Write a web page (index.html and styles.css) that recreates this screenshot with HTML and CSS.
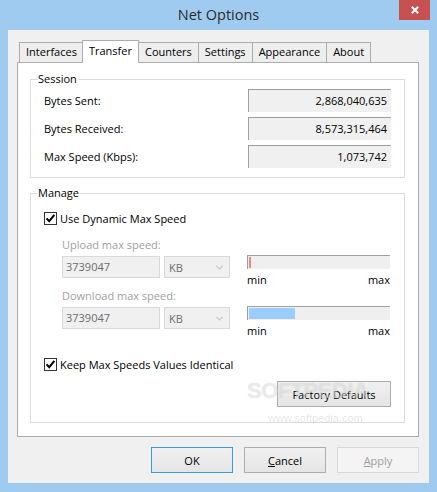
FILE: index.html
```html
<!DOCTYPE html>
<html>
<head>
<meta charset="utf-8">
<title>Net Options</title>
<link rel="stylesheet" href="styles.css">
</head>
<body>
<div class="window">
  <div class="titlebar">
    <div class="title">Net Options</div>
    <div class="close">
      <svg width="8" height="8" viewBox="0 0 8 8"><path d="M0.8 0.8 L7.2 7.2 M7.2 0.8 L0.8 7.2" stroke="#fff" stroke-width="2" fill="none"/></svg>
    </div>
  </div>
  <div class="client">
    <div class="tabs">
      <div class="tab">Interfaces</div>
      <div class="tab active">Transfer</div>
      <div class="tab">Counters</div>
      <div class="tab">Settings</div>
      <div class="tab">Appearance</div>
      <div class="tab">About</div>
    </div>
    <div class="panel">
      <fieldset class="group session">
        <legend>Session</legend>
        <div class="stats">
          <div class="stat"><span>Bytes Sent:</span><div class="value">2,868,040,635</div></div>
          <div class="stat"><span>Bytes Received:</span><div class="value">8,573,315,464</div></div>
          <div class="stat"><span>Max Speed (Kbps):</span><div class="value">1,073,742</div></div>
        </div>
      </fieldset>
      <fieldset class="group manage">
        <legend>Manage</legend>
        <div class="check">
          <span class="box"><svg width="11" height="11" viewBox="0 0 11 11"><path d="M1.6 5.4 L4.2 8.2 L9.4 1.8" stroke="#000" stroke-width="2" fill="none"/></svg></span>
          <span>Use Dynamic Max Speed</span>
        </div>
        <div class="speed">
          <div class="speed-label">Upload max speed:</div>
          <div class="inputs">
            <div class="textbox">3739047</div>
            <div class="combo"><span>KB</span><svg width="7" height="5" viewBox="0 0 7 5"><path d="M0.5 0.8 L3.5 3.8 L6.5 0.8" stroke="#c4c4c4" stroke-width="1.2" fill="none"/></svg></div>
          </div>
          <div class="meter">
            <div class="bar"><div class="fill up" style="width:2px"></div></div>
            <div class="scale"><span>min</span><span>max</span></div>
          </div>
        </div>
        <div class="speed">
          <div class="speed-label">Download max speed:</div>
          <div class="inputs">
            <div class="textbox">3739047</div>
            <div class="combo"><span>KB</span><svg width="7" height="5" viewBox="0 0 7 5"><path d="M0.5 0.8 L3.5 3.8 L6.5 0.8" stroke="#c4c4c4" stroke-width="1.2" fill="none"/></svg></div>
          </div>
          <div class="meter">
            <div class="bar"><div class="fill down" style="width:46px"></div></div>
            <div class="scale"><span>min</span><span>max</span></div>
          </div>
        </div>
        <div class="check keep">
          <span class="box"><svg width="11" height="11" viewBox="0 0 11 11"><path d="M1.6 5.4 L4.2 8.2 L9.4 1.8" stroke="#000" stroke-width="2" fill="none"/></svg></span>
          <span>Keep Max Speeds Values Identical</span>
        </div>
        <div class="actions">
          <button class="btn factory">Factory Defaults</button>
          <div class="watermark">SOFTPEDIA</div>
          <div class="watermark-url">www.softpedia.com</div>
        </div>
      </fieldset>
    </div>
    <div class="dialog-buttons">
      <button class="btn default">OK</button>
      <button class="btn"><u>C</u>ancel</button>
      <button class="btn" disabled><u>A</u>pply</button>
    </div>
  </div>
</div>
</body>
</html>
```
FILE: styles.css
```css
* { box-sizing: border-box; }
html, body { margin: 0; padding: 0; }
body {
  width: 437px;
  height: 492px;
  overflow: hidden;
  background: #a0cbf1;
  font-family: "Open Sans", "Noto Sans", sans-serif;
  font-size: 11px;
  color: #000;
}
.window { height: 492px; display: flex; flex-direction: column; }

.titlebar {
  height: 30px;
  display: grid;
  grid-template-columns: 1fr auto 1fr;
  align-items: start;
}
.title {
  grid-column: 2;
  font-size: 14.5px;
  line-height: 29px;
  color: #2b2b2b;
}
.close {
  grid-column: 3;
  justify-self: end;
  margin-right: 7px;
  width: 31px;
  height: 20px;
  background: #c75050;
  display: flex;
  align-items: center;
  justify-content: center;
}

.client {
  margin: 0 8px;
  height: 453px;
  background: #f0f0f0;
  padding: 10px 10px 0 9px;
}

.tabs {
  display: flex;
  align-items: flex-end;
  height: 22px;
  padding-left: 2px;
}
.tab {
  height: 20px;
  line-height: 18px;
  padding: 0 6px;
  border: 1px solid #acacac;
  border-bottom: 0;
  margin-left: -1px;
  background: #eeeeee;
  white-space: nowrap;
}
.tab:first-child { margin-left: 0; padding: 0 5px 0 6px; }
.tab.active {
  height: 23px;
  margin-bottom: -1px;
  line-height: 19px;
  padding: 0 6px;
  background: #fff;
  position: relative;
  z-index: 1;
}

.panel {
  height: 375px;
  background: #fff;
  border: 1px solid #acacac;
  padding: 8px 13px 0 12px;
}

.group {
  margin: 0;
  min-width: 0;
  border: 1px solid #dcdcdc;
  padding: 2px 13px 9px;
}
.group legend {
  padding: 0 1px;
  margin-left: -7px;
  line-height: 16px;
}

.stats { display: flex; flex-direction: column; gap: 5px; }
.stat {
  display: flex;
  justify-content: space-between;
  align-items: center;
  height: 23px;
}
.value {
  width: 143px;
  height: 23px;
  background: #f0f0f0;
  border-top: 1px solid #a0a0a0;
  border-left: 1px solid #a0a0a0;
  text-align: right;
  padding-right: 4px;
  line-height: 21px;
}

.manage {
  margin-top: 7px;
  padding: 10px 13px 15px;
}
.check {
  display: flex;
  align-items: center;
  height: 15px;
  line-height: 15px;
}
.box {
  width: 13px;
  height: 13px;
  border: 1px solid #333;
  background: #fff;
  margin-right: 3px;
  display: flex;
  align-items: center;
  justify-content: center;
}
.box svg { display: block; }

.speed {
  display: grid;
  grid-template-columns: 168px 143px;
  grid-template-rows: 15px 22px;
  column-gap: 17px;
  row-gap: 4px;
  margin: 11px 0 0 18px;
}
.speed + .speed { margin-top: 10px; }
.speed-label {
  grid-column: 1;
  grid-row: 1;
  color: #a0a0a0;
  line-height: 15px;
}
.inputs {
  grid-column: 1;
  grid-row: 2;
  display: flex;
  gap: 4px;
}
.textbox {
  width: 98px;
  height: 22px;
  border: 1px solid #d9d9d9;
  background: #f0f0f0;
  color: #6d6d6d;
  padding-left: 3px;
  line-height: 20px;
}
.combo {
  width: 66px;
  height: 22px;
  border: 1px solid #d9d9d9;
  background: #f0f0f0;
  color: #6d6d6d;
  display: flex;
  justify-content: space-between;
  align-items: center;
  padding: 0 6px 0 4px;
}
.meter {
  grid-column: 2;
  grid-row: 2;
  margin-top: -1px;
}
.bar {
  height: 14px;
  background: #efefef;
  border-top: 1px solid #a0a0a0;
  border-left: 1px solid #a0a0a0;
  padding: 1px;
}
.fill { height: 100%; }
.fill.up { background: #f38686; }
.fill.down { background: #99ccff; }
.scale {
  display: flex;
  justify-content: space-between;
  line-height: 15px;
  margin-top: 3px;
}

.keep { margin-top: 28px; }

.actions {
  margin-top: 9px;
  display: flex;
  justify-content: flex-end;
  position: relative;
}

.btn {
  font: inherit;
  height: 26px;
  border: 1px solid #adadad;
  background: linear-gradient(#f0f0f0, #e5e5e5);
  color: #000;
  padding: 0;
  margin: 0;
}
.btn u { text-decoration: underline; }
.factory { width: 114px; }
.btn.default { border-color: #3c9be6; }
.btn:disabled {
  border-color: #d9d9d9;
  background: #f4f4f4;
  color: #a0a0a0;
}

.watermark {
  position: absolute;
  left: 203px;
  top: -3px;
  font-family: "Liberation Sans", sans-serif;
  font-weight: bold;
  font-size: 22px;
  letter-spacing: -0.5px;
  color: rgba(255, 255, 255, 0.45);
  text-shadow: 0 0 1px rgba(0, 0, 0, 0.16);
  pointer-events: none;
}
.watermark-url {
  position: absolute;
  left: 224px;
  top: 31px;
  font-family: "Liberation Sans", sans-serif;
  font-size: 11px;
  color: rgba(0, 0, 0, 0.12);
  pointer-events: none;
}

.dialog-buttons {
  margin-top: 10px;
  display: flex;
  justify-content: flex-end;
  gap: 11px;
}
.dialog-buttons .btn { width: 82px; }
```
